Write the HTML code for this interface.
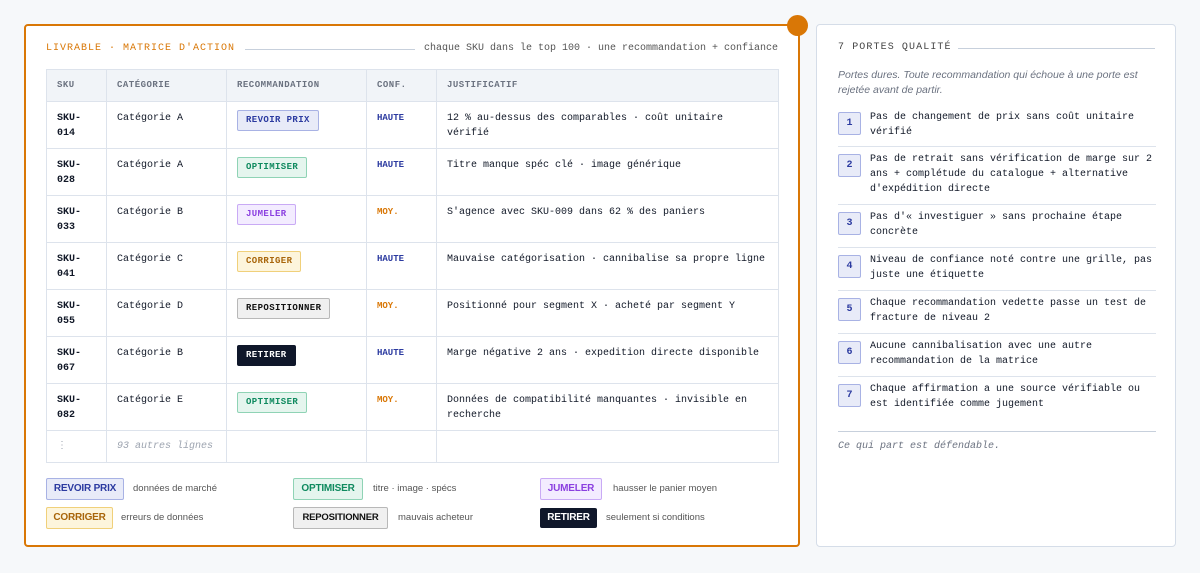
<!DOCTYPE html>
<html><head><meta charset="utf-8"><style>
*{box-sizing:border-box;margin:0;padding:0}
body{width:1200px;height:573px;background:#f6f8fa;font-family:"Liberation Mono",monospace;font-size:10px;color:#111827;position:relative;overflow:hidden}
.left{position:absolute;left:24px;top:24px;width:776px;height:523px;background:#fff;border:2px solid #d97706;border-radius:4px}
.dot{position:absolute;left:787px;top:15px;width:21px;height:21px;border-radius:50%;background:#d97706}
.right{position:absolute;left:816px;top:24px;width:360px;height:523px;background:#fff;border:1px solid #d5dde8;border-radius:4px}
.abs{position:absolute;white-space:nowrap}
.ttl{color:#d97706;letter-spacing:1px;font-size:10px}
.line{position:absolute;height:1px;background:#c7d0dc}
table{position:absolute;left:20px;top:43px;border-collapse:collapse;table-layout:fixed;width:733px}
td,th{border:1px solid #dde3ec;vertical-align:top;text-align:left;padding:9px 10px 0 10px;line-height:15px;font-size:10px}
th{height:32px;background:#f1f4f8;color:#6b7280;font-weight:bold;font-size:9px;letter-spacing:0.5px;vertical-align:middle;padding-top:0}
tr.r td{height:47px}
td.sku{font-weight:bold}
.b,.lg{border-width:1px;border-style:solid;border-radius:2px}
.b{display:inline-block;font-size:9px;font-weight:bold;letter-spacing:0.4px;height:21px;line-height:19px;padding:0 8px;margin-top:-1px}
.lg{position:absolute;font-family:"Liberation Sans",sans-serif;font-size:10px;font-weight:bold;height:22px;line-height:20px;text-align:center;letter-spacing:-0.2px}
.rp{background:#e8ebf8;border-color:#a8b2e4;color:#2b3aa0}
.op{background:#e5f5ee;border-color:#8fd3b5;color:#0f8a5f}
.ju{background:#f3ecff;border-color:#c9aaf5;color:#8b3fe0}
.co{background:#fdf5dc;border-color:#f0d07a;color:#a8650a}
.re{background:#f0f0f0;border-color:#b8b8b8;color:#111}
.rt{background:#0f172a;border-color:#0f172a;color:#fff}
.h{color:#2b3aa0;font-weight:bold;font-size:9px}
.m{color:#d97706;font-weight:bold;font-size:9px}
.lt{position:absolute;font-family:"Liberation Sans",sans-serif;font-size:9.5px;color:#555;line-height:22px;white-space:nowrap}
.it{position:absolute;left:21px;width:318px;border-bottom:1px solid #dde3ec}
.num{position:absolute;left:0;top:0;width:23px;height:23px;border:1px solid #a8b2e4;background:#e8ebf8;color:#2b3aa0;font-weight:bold;text-align:center;line-height:21px;border-radius:2px;font-size:10px}
.itx{position:absolute;left:32px;top:0;line-height:15px;width:290px}
</style></head><body>
<div class="left">
 <div class="abs ttl" style="left:20px;top:17px">LIVRABLE · MATRICE D'ACTION</div>
 <div class="line" style="left:219px;top:23px;width:170px"></div>
 <div class="abs" style="left:398px;top:17px;color:#555">chaque SKU dans le top 100 · une recommandation + confiance</div>
 <table>
  <colgroup><col style="width:60px"><col style="width:120px"><col style="width:140px"><col style="width:70px"><col></colgroup>
  <tr><th>SKU</th><th>CATÉGORIE</th><th>RECOMMANDATION</th><th>CONF.</th><th>JUSTIFICATIF</th></tr>
  <tr class="r"><td class="sku">SKU-<br>014</td><td>Catégorie A</td><td><span class="b rp">REVOIR PRIX</span></td><td class="h">HAUTE</td><td>12 % au-dessus des comparables · coût unitaire<br>vérifié</td></tr>
  <tr class="r"><td class="sku">SKU-<br>028</td><td>Catégorie A</td><td><span class="b op">OPTIMISER</span></td><td class="h">HAUTE</td><td>Titre manque spéc clé · image générique</td></tr>
  <tr class="r"><td class="sku">SKU-<br>033</td><td>Catégorie B</td><td><span class="b ju">JUMELER</span></td><td class="m">MOY.</td><td>S'agence avec SKU-009 dans 62 % des paniers</td></tr>
  <tr class="r"><td class="sku">SKU-<br>041</td><td>Catégorie C</td><td><span class="b co">CORRIGER</span></td><td class="h">HAUTE</td><td>Mauvaise catégorisation · cannibalise sa propre ligne</td></tr>
  <tr class="r"><td class="sku">SKU-<br>055</td><td>Catégorie D</td><td><span class="b re">REPOSITIONNER</span></td><td class="m">MOY.</td><td>Positionné pour segment X · acheté par segment Y</td></tr>
  <tr class="r"><td class="sku">SKU-<br>067</td><td>Catégorie B</td><td><span class="b rt">RETIRER</span></td><td class="h">HAUTE</td><td>Marge négative 2 ans · expedition directe disponible</td></tr>
  <tr class="r"><td class="sku">SKU-<br>082</td><td>Catégorie E</td><td><span class="b op">OPTIMISER</span></td><td class="m">MOY.</td><td>Données de compatibilité manquantes · invisible en<br>recherche</td></tr>
  <tr><td style="height:32px;color:#9ca3af;padding-top:8px">⋮</td><td style="color:#9ca3af;font-style:italic;padding-top:8px">93 autres lignes</td><td></td><td></td><td></td></tr>
 </table>
 <div class="lg rp" style="left:20px;top:452px;width:78px">REVOIR PRIX</div><div class="lt" style="left:107px;top:452px">données de marché</div>
 <div class="lg op" style="left:267px;top:452px;width:70px">OPTIMISER</div><div class="lt" style="left:347px;top:452px">titre · image · spécs</div>
 <div class="lg ju" style="left:514px;top:452px;width:62px">JUMELER</div><div class="lt" style="left:587px;top:452px">hausser le panier moyen</div>
 <div class="lg co" style="left:20px;top:481px;width:67px">CORRIGER</div><div class="lt" style="left:95px;top:481px">erreurs de données</div>
 <div class="lg re" style="left:267px;top:481px;width:95px;font-size:9.5px">REPOSITIONNER</div><div class="lt" style="left:372px;top:481px">mauvais acheteur</div>
 <div class="lg rt" style="left:514px;top:482px;width:57px;height:20px;line-height:18px">RETIRER</div><div class="lt" style="left:580px;top:481px">seulement si conditions</div>
</div>
<div class="dot"></div>
<div class="right">
 <div class="abs" style="left:21px;top:17px;color:#444;letter-spacing:1.1px">7 PORTES QUALITÉ</div>
 <div class="line" style="left:141px;top:23px;width:197px"></div>
 <div class="abs" style="left:21px;top:43px;font-family:'Liberation Sans',sans-serif;font-style:italic;font-size:10.5px;color:#6b7280;line-height:15px;white-space:normal;width:312px">Portes dures. Toute recommandation qui échoue à une porte est rejetée avant de partir.</div>
 <div class="it" style="top:83px;height:39px"><div class="num" style="top:4px">1</div><div class="itx" style="top:2px">Pas de changement de prix sans coût unitaire vérifié</div></div>
 <div class="it" style="top:122px;height:58px"><div class="num" style="top:7px">2</div><div class="itx" style="top:5px">Pas de retrait sans vérification de marge sur 2 ans + complétude du catalogue + alternative d'expédition directe</div></div>
 <div class="it" style="top:180px;height:43px"><div class="num" style="top:7px">3</div><div class="itx" style="top:5px">Pas d'« investiguer » sans prochaine étape concrète</div></div>
 <div class="it" style="top:223px;height:43px"><div class="num" style="top:7px">4</div><div class="itx" style="top:5px">Niveau de confiance noté contre une grille, pas juste une étiquette</div></div>
 <div class="it" style="top:266px;height:43px"><div class="num" style="top:7px">5</div><div class="itx" style="top:5px">Chaque recommandation vedette passe un test de fracture de niveau 2</div></div>
 <div class="it" style="top:309px;height:43px"><div class="num" style="top:7px">6</div><div class="itx" style="top:5px">Aucune cannibalisation avec une autre recommandation de la matrice</div></div>
 <div class="it" style="top:352px;height:43px;border:none"><div class="num" style="top:7px">7</div><div class="itx" style="top:5px">Chaque affirmation a une source vérifiable ou est identifiée comme jugement</div></div>
 <div class="line" style="left:21px;top:406px;width:318px"></div>
 <div class="abs" style="left:21px;top:416px;font-style:italic;color:#6b7280">Ce qui part est défendable.</div>
</div>
</body></html>
